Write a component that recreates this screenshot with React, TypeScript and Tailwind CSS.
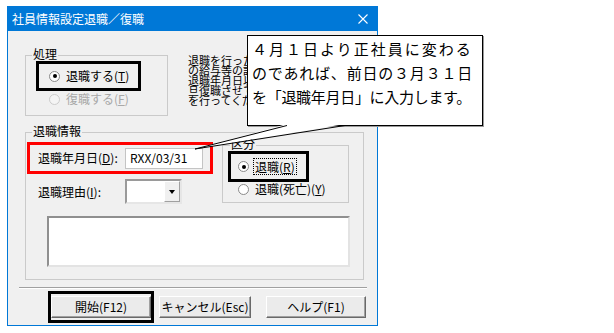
function Radio({ checked, disabled }: { checked?: boolean; disabled?: boolean }) {
  return (
    <span
      className={`flex h-[11px] w-[11px] shrink-0 items-center justify-center rounded-full border ${
        disabled ? "border-[#cccccc] bg-[#f4f4f4]" : "border-[#8a8a8a] bg-white"
      }`}
    >
      {checked && <span className="h-[4px] w-[4px] rounded-full bg-black" />}
    </span>
  );
}

function Group({
  label,
  legendLeft,
  className,
  children,
}: {
  label: string;
  legendLeft: string;
  className: string;
  children: React.ReactNode;
}) {
  return (
    <div className={`relative shrink-0 border border-[#cacaca] ${className}`}>
      <span className={`absolute top-[-8px] bg-[#f0f0f0] px-[1px] leading-[12px] ${legendLeft}`}>{label}</span>
      {children}
    </div>
  );
}

function Button({ label, width }: { label: string; width: string }) {
  return (
    <div
      className={`flex h-[22px] items-center justify-center border border-t-white border-l-white border-b-[#696969] border-r-[#696969] bg-[#ebebeb] shadow-[inset_-1px_-1px_0_#a0a0a0] ${width}`}
    >
      {label}
    </div>
  );
}

export default function App() {
  return (
    <div className="relative h-[333px] w-[614px] overflow-hidden bg-white pl-[7px] pt-[6px] font-['Noto_Sans_CJK_JP',sans-serif] text-[12px] leading-[14px] text-black">
      <div className="flex h-[320px] w-[371px] flex-col border border-[#0078d7] bg-[#f0f0f0]">
        <div className="flex h-[24px] shrink-0 items-center justify-between bg-[#0078d7] pl-[4px] pr-[9px] text-white">
          <span>社員情報設定退職／復職</span>
          <svg width="10" height="10" viewBox="0 0 10 10">
            <path d="M0.5 0.5L9.5 9.5M9.5 0.5L0.5 9.5" stroke="white" strokeWidth="1.1" />
          </svg>
        </div>

        {/* 処理 */}
        <div className="ml-[17px] mt-[24px] flex items-start">
          <Group label="処理" legendLeft="left-[6px]" className="h-[61px] w-[143px]">
            <div className="ml-[10px] mt-[5px] flex h-[30px] w-[105px] items-center gap-[6px] border-[3px] border-black pl-[10px]">
              <Radio checked />
              <span>
                退職する(<span className="underline">T</span>)
              </span>
            </div>
            <div className="mt-[1px] flex h-[14px] items-center gap-[6px] pl-[23px] text-[#a8a8a8]">
              <Radio disabled />
              <span>
                復職する(<span className="underline">F</span>)
              </span>
            </div>
          </Group>
          <div className="ml-[20px] w-[165px] whitespace-nowrap text-[11px] leading-[10px]">
            <p>退職を行った社員は翌月</p>
            <p>の給与等の計算対象外</p>
            <p>退職年月日以降に一</p>
            <p>旦復職させてから再度</p>
            <p>を行ってください。</p>
          </div>
        </div>

        {/* 退職情報 */}
        <Group label="退職情報" legendLeft="left-[6px]" className="ml-[17px] mt-[16px] h-[148px] w-[339px]">
          <div className="flex items-start">
            <div>
              <div className="ml-[1px] mt-[9px] flex h-[32px] w-[186px] items-center border-[3px] border-[#ff0000] pl-[8px]">
                <span className="w-[87px]">
                  退職年月日(<span className="underline">D</span>):
                </span>
                <div className="flex h-[21px] w-[78px] items-center border border-[#c4c4c4] bg-white pl-[4px]">
                  RXX/03/31
                </div>
              </div>
              <div className="ml-[12px] mt-[5px] flex h-[25px] items-center">
                <span className="w-[87px]">
                  退職理由(<span className="underline">I</span>):
                </span>
                <div className="flex h-[25px] w-[57px] border-2 border-t-[#9a9a9a] border-l-[#9a9a9a] border-b-[#e6e6e6] border-r-[#e6e6e6] bg-white">
                  <div className="flex-1" />
                  <div className="flex w-[16px] items-center justify-center border border-t-white border-l-white border-b-[#a0a0a0] border-r-[#a0a0a0] bg-[#f0f0f0]">
                    <span className="h-0 w-0 border-x-[3.5px] border-t-[4px] border-x-transparent border-t-black" />
                  </div>
                </div>
              </div>
            </div>

            <Group label="区分" legendLeft="left-[7px]" className="ml-[9px] mt-[12px] h-[58px] w-[127px]">
              <div className="ml-[5px] mt-[5px] flex h-[31px] w-[81px] items-center gap-[4px] border-[3px] border-black pl-[7px]">
                <Radio checked />
                <span className="border border-dotted border-black px-[1px] leading-[15px]">
                  退職(<span className="underline">R</span>)
                </span>
              </div>
              <div className="flex h-[14px] items-center gap-[6px] pl-[15px]">
                <Radio />
                <span>
                  退職(死亡)(<span className="underline">Y</span>)
                </span>
              </div>
            </Group>
          </div>
          <div className="ml-[21px] mt-[12px] h-[51px] w-[303px] border-2 border-t-[#8f8f8f] border-l-[#8f8f8f] border-b-[#e3e3e3] border-r-[#e3e3e3] bg-white" />
        </Group>

        <div className="ml-[11px] mt-[7px] h-[2px] w-[348px] border-t border-b border-t-[#a0a0a0] border-b-white" />

        <div className="mt-[2px] flex items-start">
          <div className="ml-[40px] flex h-[32px] w-[106px] items-center border-[3px] border-black">
            <Button label="開始(F12)" width="w-[100px]" />
          </div>
          <div className="ml-[5px] mt-[5px]">
            <Button label="キャンセル(Esc)" width="w-[92px]" />
          </div>
          <div className="ml-[15px] mt-[5px]">
            <Button label="ヘルプ(F1)" width="w-[100px]" />
          </div>
        </div>
      </div>

      {/* callout */}
      <div className="absolute left-[247px] top-[35px] h-[91px] w-[236px] border border-black bg-white pl-[4px] pt-[1px] text-[15px] leading-[24px] shadow-[1px_1px_0_#9a9a9a]">
        <p className="tracking-[2px]">４月１日より正社員に変わる</p>
        <p className="tracking-[0.8px]">のであれば、前日の３月３１日</p>
        <p className="tracking-[-0.3px]">を「退職年月日」に入力します。</p>
      </div>
      <svg className="pointer-events-none absolute left-0 top-0" width="614" height="333" viewBox="0 0 614 333">
        <polygon points="287,124 345,124 195,149" fill="white" />
        <polyline points="287,125.5 195,149 345,125.5" fill="none" stroke="black" strokeWidth="1" />
      </svg>
    </div>
  );
}
